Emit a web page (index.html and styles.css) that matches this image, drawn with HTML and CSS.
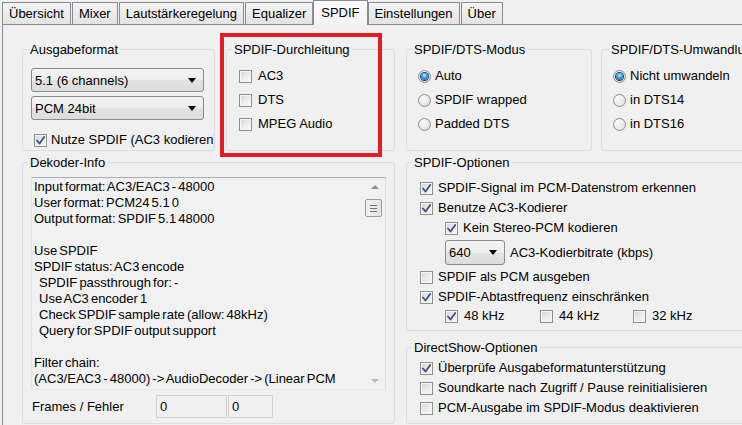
FILE: index.html
```html
<!DOCTYPE html>
<html lang="de">
<head>
<meta charset="utf-8">
<title>SPDIF</title>
<link rel="stylesheet" href="styles.css">
</head>
<body>
<div class="tabs">
  <div class="tab">Übersicht</div>
  <div class="tab">Mixer</div>
  <div class="tab">Lautstärkeregelung</div>
  <div class="tab">Equalizer</div>
  <div class="tab active">SPDIF</div>
  <div class="tab">Einstellungen</div>
  <div class="tab">Über</div>
</div>
<div class="panel">
  <div class="row row-top">
    <fieldset class="group g-format">
      <legend>Ausgabeformat</legend>
      <div class="body format-body">
        <div class="combo combo-wide"><span>5.1 (6 channels)</span><span class="arrow"></span></div>
        <div class="combo combo-wide"><span>PCM 24bit</span><span class="arrow"></span></div>
        <div class="opt opt-nutze"><span class="cb"><svg class="tick" viewBox="0 0 11 11" width="11" height="11"><path d="M2 5.5 L4.5 8.5 L9.2 2" /></svg></span><span>Nutze SPDIF (AC3 kodieren)</span></div>
      </div>
    </fieldset>
    <div class="hl-wrap">
      <fieldset class="group g-pass">
        <legend>SPDIF-Durchleitung</legend>
        <div class="body list24 pass-body">
          <div class="opt opt-wide"><span class="cb"></span><span>AC3</span></div>
          <div class="opt opt-wide"><span class="cb"></span><span>DTS</span></div>
          <div class="opt opt-wide"><span class="cb"></span><span>MPEG Audio</span></div>
        </div>
      </fieldset>
      <div class="highlight"></div>
    </div>
    <fieldset class="group g-mode">
      <legend>SPDIF/DTS-Modus</legend>
      <div class="body list24 radio-body">
        <div class="opt opt-radio"><span class="rb on"><span class="dot"></span></span><span>Auto</span></div>
        <div class="opt opt-radio"><span class="rb"></span><span>SPDIF wrapped</span></div>
        <div class="opt opt-radio"><span class="rb"></span><span>Padded DTS</span></div>
      </div>
    </fieldset>
    <fieldset class="group g-conv">
      <legend>SPDIF/DTS-Umwandlung</legend>
      <div class="body list24 radio-body">
        <div class="opt opt-radio"><span class="rb on"><span class="dot"></span></span><span>Nicht umwandeln</span></div>
        <div class="opt opt-radio"><span class="rb"></span><span>in DTS14</span></div>
        <div class="opt opt-radio"><span class="rb"></span><span>in DTS16</span></div>
      </div>
    </fieldset>
  </div>

  <div class="row row-bottom">
    <fieldset class="group g-info">
      <legend>Dekoder-Info</legend>
      <div class="body info-body">
        <div class="log">
          <div class="log-text">
            <div>Input format: AC3/EAC3 - 48000</div>
            <div>User format: PCM24 5.1 0</div>
            <div>Output format: SPDIF 5.1 48000</div>
            <div class="blank"></div>
            <div>Use SPDIF</div>
            <div>SPDIF status: AC3 encode</div>
            <div class="ind">SPDIF passthrough for: -</div>
            <div class="ind">Use AC3 encoder 1</div>
            <div class="ind">Check SPDIF sample rate (allow: 48kHz)</div>
            <div class="ind">Query for SPDIF output support</div>
            <div class="blank"></div>
            <div>Filter chain:</div>
            <div>(AC3/EAC3 - 48000) -&gt; AudioDecoder -&gt; (Linear PCM</div>
          </div>
          <div class="scroll">
            <span class="sb-btn"><span class="tri-up"></span></span>
            <span class="thumb"><i></i><i></i><i></i></span>
            <span class="sb-btn sb-bottom"><span class="tri-down"></span></span>
          </div>
        </div>
        <div class="frames">
          <span class="frames-label">Frames / Fehler</span>
          <span class="field f1">0</span>
          <span class="field f2">0</span>
        </div>
      </div>
    </fieldset>

    <div class="col-right">
      <fieldset class="group g-opts">
        <legend>SPDIF-Optionen</legend>
        <div class="body opts-body">
          <div class="opt"><span class="cb"><svg class="tick" viewBox="0 0 11 11" width="11" height="11"><path d="M2 5.5 L4.5 8.5 L9.2 2" /></svg></span><span>SPDIF-Signal im PCM-Datenstrom erkennen</span></div>
          <div class="opt"><span class="cb"><svg class="tick" viewBox="0 0 11 11" width="11" height="11"><path d="M2 5.5 L4.5 8.5 L9.2 2" /></svg></span><span>Benutze AC3-Kodierer</span></div>
          <div class="opt sub"><span class="cb"><svg class="tick" viewBox="0 0 11 11" width="11" height="11"><path d="M2 5.5 L4.5 8.5 L9.2 2" /></svg></span><span>Kein Stereo-PCM kodieren</span></div>
          <div class="opt sub combo-row"><div class="combo combo-small"><span>640</span><span class="arrow"></span></div><span>AC3-Kodierbitrate (kbps)</span></div>
          <div class="opt"><span class="cb"></span><span>SPDIF als PCM ausgeben</span></div>
          <div class="opt"><span class="cb"><svg class="tick" viewBox="0 0 11 11" width="11" height="11"><path d="M2 5.5 L4.5 8.5 L9.2 2" /></svg></span><span>SPDIF-Abtastfrequenz einschränken</span></div>
          <div class="freq-row">
            <div class="opt freq f48"><span class="cb"><svg class="tick" viewBox="0 0 11 11" width="11" height="11"><path d="M2 5.5 L4.5 8.5 L9.2 2" /></svg></span><span>48 kHz</span></div>
            <div class="opt freq f44"><span class="cb"></span><span>44 kHz</span></div>
            <div class="opt freq"><span class="cb"></span><span>32 kHz</span></div>
          </div>
        </div>
      </fieldset>
      <fieldset class="group g-ds">
        <legend>DirectShow-Optionen</legend>
        <div class="body ds-body">
          <div class="opt"><span class="cb"><svg class="tick" viewBox="0 0 11 11" width="11" height="11"><path d="M2 5.5 L4.5 8.5 L9.2 2" /></svg></span><span>Überprüfe Ausgabeformatunterstützung</span></div>
          <div class="opt"><span class="cb"></span><span>Soundkarte nach Zugriff / Pause reinitialisieren</span></div>
          <div class="opt"><span class="cb"></span><span>PCM-Ausgabe im SPDIF-Modus deaktivieren</span></div>
        </div>
      </fieldset>
    </div>
  </div>
</div>
</body>
</html>
```

FILE: styles.css
```css
* { box-sizing: border-box; }
html, body { margin: 0; padding: 0; overflow: hidden; }
body {
  width: 742px;
  height: 425px;
  background: #f0f0f0;
  font-family: "Liberation Sans", Arial, sans-serif;
  font-size: 13px;
  line-height: 15px;
  color: #000;
}

/* Tabs */
.tabs {
  display: flex;
  align-items: flex-end;
  height: 24px;
  padding-left: 2px;
  width: 900px;
}
.tab {
  height: 22px;
  padding: 0 6px;
  margin-right: 1px;
  border: 1px solid #898c95;
  border-bottom: none;
  background: linear-gradient(#f4f4f4, #e3e3e3);
  line-height: 21px;
  white-space: nowrap;
}
.tab.active {
  height: 25px;
  margin: 0 0 -1px -1px;
  padding: 1px 7px 0;
  line-height: 22px;
  background: linear-gradient(#fcfcfc, #f3f3f3);
  position: relative;
  z-index: 1;
}

/* Panel */
.panel {
  margin-left: 2px;
  width: 900px;
  height: 420px;
  border-top: 1px solid #898c95;
  border-left: 1px solid #898c95;
  background: #f0f0f0;
  padding: 17px 0 0 19px;
}
.row { display: flex; align-items: flex-start; column-gap: 11px; }
.row-bottom { margin-top: 4px; }

.group {
  margin: 0;
  padding: 0;
  border: 1px solid #d5dfe5;
  border-radius: 3px;
  min-width: 0;
}
.group legend {
  margin-left: 5px;
  padding: 0 2px;
  line-height: 15px;
  white-space: nowrap;
}
.body { overflow: hidden; white-space: nowrap; }

.g-format { width: 193px; height: 109px; }
.hl-wrap { position: relative; width: 169px; }
.g-pass { width: 169px; height: 109px; }
.g-mode { width: 186px; height: 109px; }
.g-conv { width: 220px; height: 109px; margin-left: -2px; }
.g-conv legend { margin-left: 7px; }

.highlight {
  position: absolute;
  left: -6px;
  top: -9px;
  width: 162px;
  height: 124px;
  border: 4px solid #e31c25;
}

/* Ausgabeformat */
.format-body {
  padding: 11px 0 0 8px;
  display: flex;
  flex-direction: column;
  row-gap: 4px;
  height: 92px;
}
.combo {
  display: flex;
  align-items: center;
  justify-content: space-between;
  height: 24px;
  padding: 0 7px 0 3px;
  border: 1px solid #8b8b8b;
  border-radius: 3px;
  background: linear-gradient(#f4f4f4 0%, #ededed 50%, #e3e3e3 51%, #dcdcdc 100%);
  flex-shrink: 0;
}
.combo-wide { width: 173px; }
.combo-small { width: 60px; height: 25px; }
.arrow {
  width: 0;
  height: 0;
  border-left: 4px solid transparent;
  border-right: 4px solid transparent;
  border-top: 5px solid #000;
}

.opt {
  display: flex;
  align-items: center;
  column-gap: 5px;
  height: 20px;
  line-height: 20px;
  white-space: nowrap;
}
.opt-nutze { margin: 6px 0 0 3px; column-gap: 4px; }
.list24 .opt { height: 24px; }
.opt-wide { column-gap: 6px; }
.opt-radio { column-gap: 4px; }

.pass-body { padding: 7px 0 0 12px; }
.radio-body { padding: 7px 0 0 11px; }

/* Checkbox */
.cb {
  display: inline-flex;
  width: 13px;
  height: 13px;
  flex: 0 0 13px;
  border: 1px solid #8e8f8f;
  background: linear-gradient(135deg, #d6d6d6 0%, #ececec 55%, #fafafa 100%);
  box-shadow: inset 0 0 0 1px #f6f6f6;
}
.tick path {
  fill: none;
  stroke: #3f538c;
  stroke-width: 1.9;
  stroke-linecap: round;
  stroke-linejoin: round;
}

/* Radio */
.rb {
  display: inline-flex;
  align-items: center;
  justify-content: center;
  width: 13px;
  height: 13px;
  flex: 0 0 13px;
  border: 1px solid #8e8f8f;
  border-radius: 50%;
  background: radial-gradient(circle at 35% 35%, #fbfbfb 0%, #e9e9e9 55%, #d2d2d2 100%);
}
.rb .dot {
  width: 7px;
  height: 7px;
  border-radius: 50%;
  background: radial-gradient(circle at 50% 35%, #b4ecff 0%, #3a9ee0 45%, #174f8f 100%);
  box-shadow: 0 0 0 1px #1d3f6e;
}

/* Dekoder-Info */
.g-info { width: 373px; height: 269px; }
.info-body { padding: 7px 0 0 8px; }
.log {
  display: flex;
  width: 355px;
  height: 213px;
  border: 1px solid;
  border-color: #abadb3 #dbdfe6 #e3e9ef #e2e3ea;
  background: #f1f1f1;
}
.log-text {
  flex: 1;
  padding: 1px 0 0 2px;
  line-height: 16px;
  word-spacing: -1.5px;
  overflow: hidden;
}
.log-text .blank { height: 16px; }
.log-text .ind { padding-left: 5px; }

.scroll {
  width: 17px;
  margin-right: 2px;
  display: flex;
  flex-direction: column;
}
.sb-btn {
  display: flex;
  align-items: center;
  justify-content: center;
  height: 17px;
}
.sb-bottom { margin-top: auto; }
.tri-up {
  width: 0; height: 0;
  border-left: 4px solid transparent;
  border-right: 4px solid transparent;
  border-bottom: 4px solid #8f8f8f;
}
.tri-down {
  width: 0; height: 0;
  border-left: 4px solid transparent;
  border-right: 4px solid transparent;
  border-top: 4px solid #b9b9b9;
}
.thumb {
  margin: 4px 0 0 -1px;
  width: 17px;
  height: 18px;
  border: 1px solid #9b9b9b;
  border-radius: 2px;
  background: linear-gradient(90deg, #f2f2f2, #e2e2e2);
  display: flex;
  flex-direction: column;
  align-items: center;
  justify-content: center;
  row-gap: 2px;
}
.thumb i {
  display: block;
  width: 7px;
  height: 1px;
  background: #6f6f6f;
}

.frames {
  display: flex;
  align-items: center;
  height: 23px;
  margin-top: 5px;
  padding-left: 1px;
}
.frames-label { width: 124px; }
.field {
  height: 23px;
  line-height: 21px;
  padding-left: 3px;
  border: 1px solid #d2d2d2;
  background: #f0f0f0;
}
.f1 { width: 71px; }
.f2 { width: 45px; margin-left: 1px; }

/* Right column */
.col-right {
  width: 345px;
  display: flex;
  flex-direction: column;
  row-gap: 9px;
}
.g-opts { width: 345px; height: 176px; }
.opts-body { padding: 8px 0 0 13px; }
.opt.sub { margin-left: 25px; }
.combo-row { height: 25px; margin-top: 2px; margin-bottom: 2px; }
.freq-row { display: flex; height: 18px; margin-left: 25px; }
.freq { height: 18px; column-gap: 6px; }
.f48 { width: 95px; }
.f44 { width: 93px; }

.g-ds { width: 345px; height: 84px; }
.ds-body { padding: 3px 0 0 13px; }
```
